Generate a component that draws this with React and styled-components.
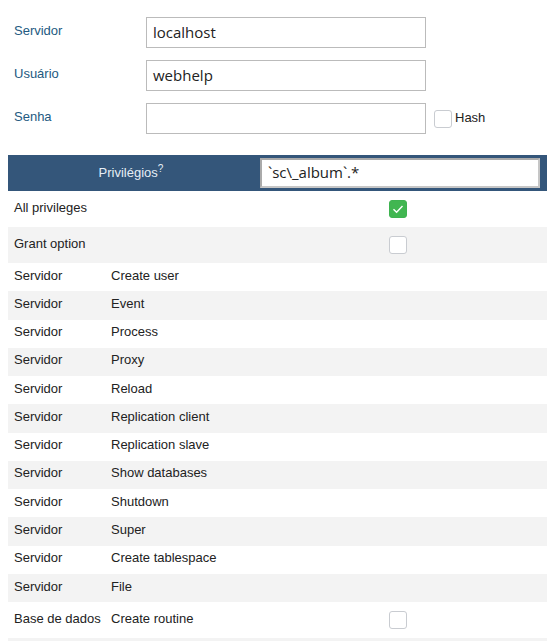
import React from 'react';
import styled, { createGlobalStyle } from 'styled-components';

const GlobalStyle = createGlobalStyle`
  body {
    margin: 0;
    background: #fff;
    font-family: "Liberation Sans", Arial, sans-serif;
    font-size: 13px;
    color: #222;
  }
`;

const Page = styled.div`
  padding: 17px 10px 0 8px;
`;

const Form = styled.div`
  display: flex;
  flex-direction: column;
  gap: 12px;
  margin-bottom: 21px;
`;

const FormRow = styled.div`
  display: flex;
  align-items: center;
  height: 31px;
`;

const FormLabel = styled.label`
  width: 138px;
  padding: 0 0 4px 6px;
  box-sizing: border-box;
  color: #235a81;
  font-size: 13px;
`;

const TextInput = styled.div`
  width: 280px;
  height: 31px;
  box-sizing: border-box;
  border: 1px solid #bbb;
  background: #fff;
  padding: 0 6px 2px;
  display: flex;
  align-items: center;
  font-family: "Open Sans", "DejaVu Sans", sans-serif;
  font-size: 15px;
  color: #222;
`;

const Box = styled.span`
  display: inline-flex;
  align-items: center;
  justify-content: center;
  width: 18px;
  height: 18px;
  box-sizing: border-box;
  border-radius: 3px;
  border: 1px solid ${p => (p.checked ? '#3eb350' : '#c9ccd1')};
  background: ${p => (p.checked ? '#41b651' : '#fff')};
`;

const HashLabel = styled.span`
  display: flex;
  align-items: center;
  gap: 3px;
  margin-left: 8px;
  font-size: 13px;
  color: #222;

  span + span {
    margin-top: -2px;
  }
`;

const Table = styled.div`
  width: 539px;
`;

const Header = styled.div`
  display: grid;
  grid-template-columns: 246px 1fr;
  align-items: center;
  height: 36px;
  background: #34567a;
  padding-right: 7px;
`;

const HeaderTitle = styled.div`
  text-align: center;
  color: #e6eef6;
  font-size: 13px;
  margin-top: -2px;

  sup {
    font-size: 10px;
    vertical-align: 5px;
    line-height: 0;
  }
`;

const FilterInput = styled(TextInput)`
  width: auto;
  height: 30px;
  margin-left: 6px;
  border: 2px solid #c6c6c6;
  border-top-color: #aaa;
  border-left-color: #aaa;
`;

const Row = styled.div`
  display: grid;
  grid-template-columns: 97px 269px 36px 1fr;
  align-items: center;
  box-sizing: border-box;
  height: ${p => (p.tall ? '36px' : '28.27px')};
  background: ${p => (p.shade ? '#f3f3f3' : '#fff')};
  padding: 0 0 4px 6px;
  color: #222;
`;

const Wide = styled.div`
  grid-column: 1 / span 2;
`;

const CheckCell = styled.div`
  grid-column: 3;
  display: flex;
  justify-content: center;
  margin-bottom: -4px;
`;

const Check = () => (
  <svg width="12" height="10" viewBox="0 0 12 10">
    <path d="M1.5 5.2 L4.6 8.2 L10.5 2" fill="none" stroke="#fff" strokeWidth="1.4" />
  </svg>
);

const serverPrivs = [
  'Create user', 'Event', 'Process', 'Proxy', 'Reload', 'Replication client',
  'Replication slave', 'Show databases', 'Shutdown', 'Super', 'Create tablespace', 'File',
];

export default function App() {
  return (
    <Page>
      <GlobalStyle />
      <Form>
        <FormRow>
          <FormLabel>Servidor</FormLabel>
          <TextInput>localhost</TextInput>
        </FormRow>
        <FormRow>
          <FormLabel>Usuário</FormLabel>
          <TextInput>webhelp</TextInput>
        </FormRow>
        <FormRow>
          <FormLabel>Senha</FormLabel>
          <TextInput />
          <HashLabel><Box /><span>Hash</span></HashLabel>
        </FormRow>
      </Form>

      <Table>
        <Header>
          <HeaderTitle>Privilégios<sup>?</sup></HeaderTitle>
          <FilterInput>`sc\_album`.*</FilterInput>
        </Header>
        <Row tall>
          <Wide>All privileges</Wide>
          <CheckCell><Box checked><Check /></Box></CheckCell>
        </Row>
        <Row tall shade>
          <Wide>Grant option</Wide>
          <CheckCell><Box /></CheckCell>
        </Row>
        {serverPrivs.map((p, i) => (
          <Row key={p} shade={i % 2 === 1}>
            <div>Servidor</div>
            <div>{p}</div>
          </Row>
        ))}
        <Row tall>
          <div>Base de dados</div>
          <div>Create routine</div>
          <CheckCell><Box /></CheckCell>
        </Row>
        <Row tall shade />
      </Table>
    </Page>
  );
}
